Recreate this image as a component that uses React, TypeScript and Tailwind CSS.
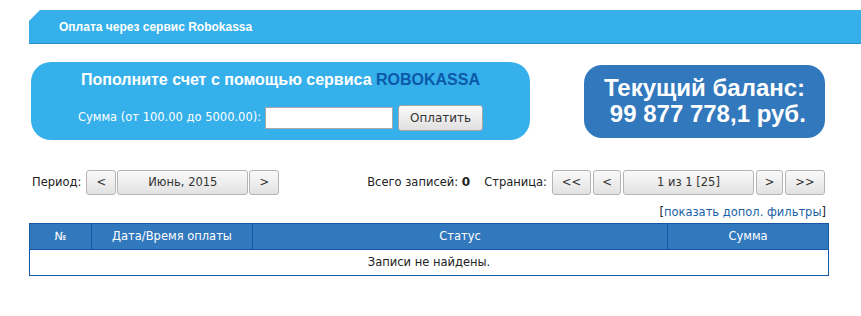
const Btn = ({ label, w }: { label: string; w: string }) => (
  <button
    className={`${w} h-[25px] shrink-0 rounded-[3px] border border-[#b4b4b4] bg-gradient-to-b from-[#fafafa] to-[#e2e2e2] text-[11.5px] text-[#333] leading-none`}
  >
    {label}
  </button>
);

const App = () => {
  const sans = "font-['DejaVu_Sans',sans-serif]";
  const arial = "font-['Liberation_Sans',Arial,sans-serif]";

  return (
    <div className={`w-[861px] h-[316px] bg-white overflow-hidden ${sans} text-[11.5px] text-[#222]`}>
      {/* Header */}
      <div className="pt-[10px] pl-[29px]">
        <div className="h-[34px] bg-[#35b0eb] border-b border-[#2a8fc6] [clip-path:polygon(11px_0,100%_0,100%_100%,0_100%,0_11px)] flex items-center">
          <span className={`${arial} pl-[30px] text-[12px] font-bold text-white`}>Оплата через сервис Robokassa</span>
        </div>
      </div>

      {/* Top panels */}
      <div className="flex items-center mt-[18px] pl-[31px] pr-[36px]">
        <div className="w-[499px] h-[78px] rounded-[20px] bg-[#35b0eb] flex flex-col items-center pt-[8px]">
          <div className={`${arial} text-[16px] font-bold leading-[19px] text-white`}>
            Пополните счет с помощью сервиса <span className="text-[#0b59a8]">ROBOKASSA</span>
          </div>
          <div className="flex items-center mt-[16px]">
            <span className="text-white text-[11.5px]">Сумма (от 100.00 до 5000.00):</span>
            <input className="ml-[4px] w-[128px] h-[22px] bg-white border border-[#a9a9a9] outline-none" />
            <button className="ml-[5px] w-[85px] h-[26px] rounded-[3px] border border-[#a6a6a6] bg-gradient-to-b from-[#fbfbfb] to-[#e0e0e0] text-[12px] text-[#333]">
              Оплатить
            </button>
          </div>
        </div>
        <div className={`ml-auto w-[241px] h-[73px] rounded-[18px] bg-[#3278bd] flex flex-col items-center justify-center ${arial} text-[24px] font-bold leading-[26px] text-white`}>
          <div>Текущий баланс:</div>
          <div>&nbsp;99 877 778,1 руб.</div>
        </div>
      </div>

      {/* Period / paging */}
      <div className="flex items-center mt-[30px] pl-[32px] pr-[36px]">
        <span>Период:</span>
        <div className="flex gap-[1px] ml-[5px]">
          <Btn label="<" w="w-[30px]" />
          <Btn label="Июнь, 2015" w="w-[131px]" />
          <Btn label=">" w="w-[30px]" />
        </div>
        <span className="ml-auto">
          Всего записей: <b className="text-[12px]">0</b>
        </span>
        <span className="ml-[14px]">Страница:</span>
        <div className="flex gap-[2px] ml-[5px]">
          <Btn label="<<" w="w-[39px]" />
          <Btn label="<" w="w-[28px]" />
          <Btn label="1 из 1 [25]" w="w-[131px]" />
          <Btn label=">" w="w-[27px]" />
          <Btn label=">>" w="w-[40px]" />
        </div>
      </div>

      {/* Filters link */}
      <div className="flex justify-end pr-[35px] mt-[9px] leading-[16px]">
        [<span className="text-[#1a5fa8]">показать допол. фильтры</span>]
      </div>

      {/* Table */}
      <div className="pl-[29px] mt-[3px]">
        <table className="w-[800px] border-collapse border border-[#1458a6] table-fixed">
          <thead>
            <tr className="bg-[#3278bd] text-white h-[26px]">
              <th className="w-[62px] border border-[#1458a6] font-normal">№</th>
              <th className="w-[161px] border border-[#1458a6] font-normal">Дата/Время оплаты</th>
              <th className="border border-[#1458a6] font-normal">Статус</th>
              <th className="w-[161px] border border-[#1458a6] font-normal">Сумма</th>
            </tr>
          </thead>
          <tbody>
            <tr className="h-[26px]">
              <td colSpan={4} className="text-center">Записи не найдены.</td>
            </tr>
          </tbody>
        </table>
      </div>
    </div>
  );
};

export default App;
